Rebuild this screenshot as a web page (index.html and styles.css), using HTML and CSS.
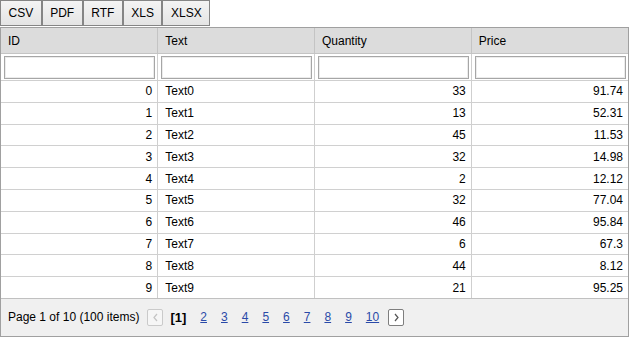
FILE: index.html
```html
<!DOCTYPE html>
<html lang="en">
  <head>
    <meta charset="UTF-8" />
    <title>Grid export</title>
    <link rel="stylesheet" href="styles.css">
  </head>
  <body>
    <div class="toolbar">
      <button type="button">CSV</button>
      <button type="button">PDF</button>
      <button type="button">RTF</button>
      <button type="button">XLS</button>
      <button type="button">XLSX</button>
    </div>
    <div class="grid">
      <table>
        <thead>
          <tr class="header">
            <th>ID</th>
            <th>Text</th>
            <th>Quantity</th>
            <th>Price</th>
          </tr>
          <tr class="filter">
            <td><input type="text" /></td>
            <td><input type="text" /></td>
            <td><input type="text" /></td>
            <td><input type="text" /></td>
          </tr>
        </thead>
        <tbody>
          <tr><td class="num">0</td><td>Text0</td><td class="num">33</td><td class="num">91.74</td></tr>
          <tr><td class="num">1</td><td>Text1</td><td class="num">13</td><td class="num">52.31</td></tr>
          <tr><td class="num">2</td><td>Text2</td><td class="num">45</td><td class="num">11.53</td></tr>
          <tr><td class="num">3</td><td>Text3</td><td class="num">32</td><td class="num">14.98</td></tr>
          <tr><td class="num">4</td><td>Text4</td><td class="num">2</td><td class="num">12.12</td></tr>
          <tr><td class="num">5</td><td>Text5</td><td class="num">32</td><td class="num">77.04</td></tr>
          <tr><td class="num">6</td><td>Text6</td><td class="num">46</td><td class="num">95.84</td></tr>
          <tr><td class="num">7</td><td>Text7</td><td class="num">6</td><td class="num">67.3</td></tr>
          <tr><td class="num">8</td><td>Text8</td><td class="num">44</td><td class="num">8.12</td></tr>
          <tr><td class="num">9</td><td>Text9</td><td class="num">21</td><td class="num">95.25</td></tr>
        </tbody>
      </table>
      <div class="pager">
        <span class="summary">Page 1 of 10 (100 items)</span>
        <span class="arrow disabled">
          <svg width="9" height="9" viewBox="0 0 9 9"><path d="M6 1 L3 4.5 L6 8" fill="none" stroke="#c4c4c4" stroke-width="1.2"/></svg>
        </span>
        <b class="current">[1]</b>
        <a href="#">2</a>
        <a href="#">3</a>
        <a href="#">4</a>
        <a href="#">5</a>
        <a href="#">6</a>
        <a href="#">7</a>
        <a href="#">8</a>
        <a href="#">9</a>
        <a href="#">10</a>
        <span class="arrow">
          <svg width="9" height="9" viewBox="0 0 9 9"><path d="M3 1 L6 4.5 L3 8" fill="none" stroke="#555" stroke-width="1.2"/></svg>
        </span>
      </div>
    </div>
  </body>
</html>
```

FILE: styles.css
```css
body {
  margin: 0;
  background: #fff;
  font-family: "Liberation Sans", Arial, sans-serif;
  font-size: 12px;
  color: #000;
}

.toolbar {
  display: flex;
  margin-bottom: 1px;
}

.toolbar button {
  font-family: inherit;
  font-size: 12px;
  color: #000;
  height: 26px;
  padding: 0 7.5px;
  border: 1px solid #858585;
  border-radius: 0;
  background: linear-gradient(#f4f4f4, #e4e4e4);
  cursor: pointer;
}

.grid {
  width: 629px;
  box-sizing: border-box;
  border: 1px solid #a0a0a0;
}

table {
  width: 100%;
  border-collapse: collapse;
  table-layout: fixed;
}

th,
td {
  border-left: 1px solid #cfcfcf;
  padding: 0 6px 0 7px;
  text-align: left;
  white-space: nowrap;
}

th:first-child,
td:first-child {
  border-left: 0;
}

.header th {
  background: #dcdcdc;
  font-weight: normal;
  height: 25px;
  border-left-color: #c4c4c4;
  border-bottom: 1px solid #c4c4c4;
}

.filter td {
  height: 26px;
  padding: 0 2px 0 3px;
  border-bottom: 1px solid #cfcfcf;
}

.filter input {
  display: block;
  width: 100%;
  height: 23px;
  box-sizing: border-box;
  border: 1px solid #a6a6a6;
  box-shadow: inset 0 0 0 1px #ececec;
  font-family: inherit;
  font-size: 12px;
  padding: 0 4px;
}

tbody td {
  height: 20.8px;
  border-bottom: 1px solid #d0d0d0;
}

tbody tr:last-child td {
  border-bottom: 1px solid #c0c0c0;
}

td.num {
  text-align: right;
  padding-right: 5px;
}

.pager {
  display: flex;
  align-items: center;
  height: 37px;
  padding-left: 7px;
  background: #f0f0f0;
}

.summary {
  margin-right: 8px;
}

.arrow {
  display: flex;
  align-items: center;
  justify-content: center;
  width: 14px;
  height: 15px;
  border: 1px solid #7e7e7e;
  border-radius: 2px;
  background: #fff;
}

.arrow.disabled {
  border-color: #cacaca;
  background: #f6f6f6;
  margin-right: 7px;
}

.current {
  margin-right: 14px;
  font-size: 13px;
}

.pager a {
  color: #2a4aa8;
  margin-right: 14px;
}

.pager a:last-of-type {
  margin-right: 9px;
}
```
